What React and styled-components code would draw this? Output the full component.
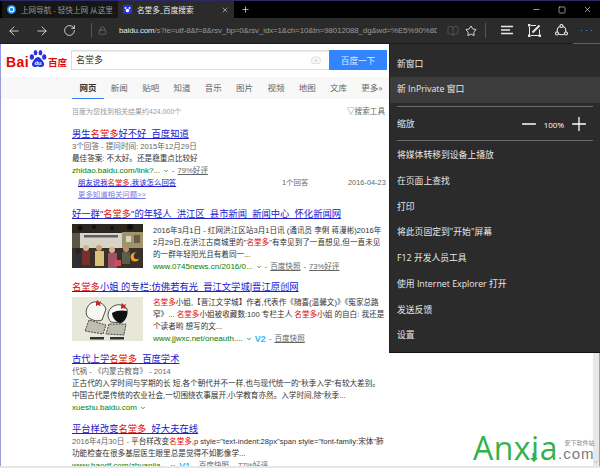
import React from 'react'
import styled, {createGlobalStyle} from 'styled-components'
import {ArrowLeft, ArrowRight, RotateCw, Lock, BookOpen, Star, X, Plus, Minus, Square, Camera, ChevronDown} from 'lucide-react'

const CJK = '"Noto Sans CJK SC", sans-serif'
const PAGE_FONT = `"Liberation Sans", ${CJK}`
const UI_FONT = `"Open Sans", ${CJK}`

const Global = createGlobalStyle`
  html, body { margin: 0; padding: 0; background: #fff; }
  * { box-sizing: border-box; }
`
const Win = styled.div`
  width: 600px;
  height: 468px;
  display: flex;
  flex-direction: column;
  overflow: hidden;
  border-top: 1px solid #2a2a6a;
  background: #fff;
  font-family: ${UI_FONT};
`
const TabBar = styled.div`
  height: 17px;
  flex: none;
  background: #000;
  display: flex;
  align-items: stretch;
  padding-left: 2px;
  color: #ddd;
`
const Tab = styled.div`
  width: 116px;
  display: flex;
  align-items: center;
  gap: 5px;
  padding: 0 5px;
  font-size: 7.6px;
  white-space: nowrap;
  overflow: hidden;
  background: ${p => p.$active ? '#2b2b2b' : '#161616'};
  color: ${p => p.$active ? '#f0f0f0' : '#999'};
`
const TabTitle = styled.span`
  flex: 1;
`
const NewTab = styled.div`
  width: 20px;
  display: flex;
  align-items: center;
  justify-content: center;
  margin-left: 1px;
`
const WinControls = styled.div`
  margin-left: auto;
  display: flex;
  align-items: center;
  gap: 17px;
  padding-right: 8px;
  color: #ccc;
`
const Toolbar = styled.div`
  height: 26px;
  flex: none;
  background: #2b2b2b;
  border-bottom: 1px solid #1c1c1c;
  display: flex;
  align-items: center;
  position: relative;
  padding-left: 7px;
  color: #e4e4e4;
`
const NavIcons = styled.div`
  display: flex;
  gap: 14px;
  align-items: center;
`
const Sep = styled.div`
  width: 1px;
  height: 15px;
  background: #555;
  margin: ${p => p.$margin};
`
const Url = styled.div`
  width: 318px;
  margin-left: 12px;
  font-size: 7.9px;
  letter-spacing: -0.1px;
  white-space: nowrap;
  overflow: hidden;
  color: #9a9a9a;
  font-family: ${PAGE_FONT};
  & b { color: #e8e8e8; font-weight: normal; }
`
const RightIcons = styled.div`
  display: flex;
  align-items: center;
  gap: ${p => p.$gap}px;
  margin-left: ${p => p.$left}px;
`
const More = styled.div`
  position: absolute;
  right: 0;
  bottom: -1px;
  width: 27px;
  height: 26px;
  border-bottom: 1px solid #1a6fc4;
  display: flex;
  align-items: center;
  justify-content: center;
  gap: 3.5px;
`
const Dot = styled.i`
  width: 1.5px;
  height: 1.5px;
  background: #2f8fe8;
`
const Main = styled.div`
  flex: 1;
  display: flex;
  min-height: 0;
  border-bottom: 2px solid #e6e6e6;
`
const Page = styled.div`
  width: 389px;
  flex: none;
  border-left: 1px solid #9a9ade;
  font-family: ${PAGE_FONT};
  overflow: hidden;
  display: flex;
  flex-direction: column;
`
const Head = styled.div`
  height: 33px;
  flex: none;
  display: flex;
  align-items: flex-start;
  padding: 3px 0 0 5px;
`
const Logo = styled.div`
  width: 65px;
  display: flex;
  align-items: flex-end;
  color: #e10601;
  font-weight: bold;
  white-space: nowrap;
  height: 23px;
`
const LogoLatin = styled.span`
  font-size: 14px;
  line-height: 16px;
  letter-spacing: 0.4px;
`
const LogoCjk = styled.span`
  font-size: 9.6px;
  line-height: 15px;
  font-family: ${CJK};
  letter-spacing: 0;
`
const SearchBox = styled.div`
  margin-top: 3px;
  width: 316px;
  height: 20px;
  display: flex;
  border: 1px solid #ddd;
  border-right: 0;
  box-shadow: inset 0 1px 1px #eee;
`
const SearchText = styled.div`
  flex: 1;
  padding-left: 4px;
  font-size: 9px;
  line-height: 18px;
  color: #333;
  font-family: ${CJK};
`
const CameraWrap = styled.div`
  width: 18px;
  display: flex;
  align-items: center;
  color: #bbb;
`
const SearchBtn = styled.div`
  width: 58px;
  margin: -1px 0;
  height: 20px;
  background: #3385ff;
  color: #dfeaff;
  font-size: 8.6px;
  line-height: 20px;
  text-align: center;
  font-family: ${CJK};
`
const NavRow = styled.div`
  height: 22px;
  flex: none;
  background: #f8f8f8;
  display: flex;
  gap: 14.3px;
  padding: 0 0 0 78.5px;
  white-space: nowrap;
`
const NavItem = styled.div`
  position: relative;
  font-size: 8.5px;
  line-height: 21px;
  color: ${p => p.$active ? '#333' : '#666'};
  font-weight: ${p => p.$active ? 'bold' : 'normal'};
  font-family: ${CJK};
  &::after {
    content: '';
    display: ${p => p.$active ? 'block' : 'none'};
    position: absolute;
    left: -8px;
    right: -7px;
    bottom: 0;
    height: 1px;
    background: #3385ff;
  }
`
const Stats = styled.div`
  display: flex;
  justify-content: space-between;
  padding: 8px 4px 0 71px;
  font-size: 7px;
  line-height: 10px;
  color: #999;
  margin-bottom: 10px;
  & > span:last-child { color: #666; font-size: 7.6px; }
`
const Results = styled.div`
  padding-left: 71px;
  display: flex;
  flex-direction: column;
`
const Result = styled.div`
  margin-bottom: ${p => p.$gap}px;
`
const Title = styled.div`
  font-size: 9.3px;
  line-height: 14px;
  height: 14px;
  color: #2020d0;
  text-decoration: underline;
  white-space: nowrap;
  & em { color: #e10601; font-style: normal; }
`
const Line = styled.div`
  font-size: 7.6px;
  line-height: 12px;
  height: 12px;
  color: ${p => p.$gray ? '#666' : '#333'};
  white-space: nowrap;
  & em { color: #e10601; font-style: normal; }
  & small { font-size: inherit; color: #666; }
`
const UrlLine = styled(Line)`
  display: flex;
  align-items: center;
  gap: 3px;
  color: #666;
`
const Green = styled.span`
  color: #008000;
  font-size: 8px;
`
const Snap = styled.span`
  color: #666;
  text-decoration: underline;
`
const V = styled.span`
  color: #3cb6f5;
  font-weight: bold;
  font-size: 9px;
`
const SubRow = styled.div`
  display: grid;
  grid-template-columns: 204px 66px 1fr;
  padding-left: 6px;
  font-size: 7.4px;
  line-height: 12px;
  height: 12px;
  color: #666;
  white-space: nowrap;
  & > a { color: #2020d0; text-decoration: underline; }
  & em { color: #e10601; font-style: normal; }
`
const MoreLink = styled.div`
  padding-left: 6px;
  font-size: 7.4px;
  line-height: 12px;
  color: #7a7ae0;
  text-decoration: underline;
`
const Media = styled.div`
  display: flex;
  gap: 10px;
  margin-top: 3px;
`
const MediaText = styled.div`
  padding-top: ${p => p.$top || 0}px;
`
const Thumb = styled.svg`
  width: 71px;
  height: 44px;
  flex: none;
  display: block;
`
const Side = styled.div`
  width: 211px;
  flex: none;
  display: flex;
  flex-direction: column;
`
const Menu = styled.div`
  height: 309px;
  flex: none;
  background: #2b2b2b;
  border-bottom: 1px solid #111;
  border-left: 1px solid #222;
  padding-top: 7.5px;
  color: #e8e8e8;
  font-size: 8.8px;
`
const MenuItem = styled.div`
  height: 25.7px;
  line-height: 25.7px;
  padding: 0 7px;
  white-space: nowrap;
  background: ${p => p.$hover ? '#3c3c3c' : 'transparent'};
`
const MenuSep = styled.div`
  height: 1px;
  margin: ${p => p.$margin};
  background: #6a6a6a;
`
const ZoomRow = styled(MenuItem)`
  display: flex;
  align-items: center;
  height: 31px;
  line-height: 31px;
`
const ZoomCtl = styled.div`
  margin-left: auto;
  display: flex;
  align-items: center;
  gap: 4px;
  padding-right: 3px;
  font-size: 8px;
  color: #fff;
`
const Blank = styled.div`
  flex: 1;
  position: relative;
  display: flex;
  justify-content: flex-end;
  border-right: 1px solid #9a9ade;
`
const Scroll = styled.div`
  width: 6px;
  background: #e8e8e8;
  display: flex;
  flex-direction: column;
  justify-content: flex-end;
  align-items: center;
  color: #888;
  padding-bottom: 1px;
`
const Watermark = styled.div`
  position: absolute;
  left: 84px;
  bottom: 0;
  display: flex;
  align-items: flex-end;
  font-family: "Open Sans", sans-serif;
  white-space: nowrap;
`
const WmName = styled.span`
  position: relative;
  font-size: 32px;
  line-height: 36px;
  color: #35b14b;
  letter-spacing: 0.5px;
`
const WmArrow = styled.svg`
  position: absolute;
  left: 57px;
  bottom: 4px;
`
const WmRight = styled.div`
  display: flex;
  flex-direction: column;
  align-items: flex-end;
  margin-bottom: 5px;
`
const WmCn = styled.span`
  display: block;
  font-size: 6px;
  line-height: 7px;
  color: #888;
  font-family: ${CJK};
`
const WmCom = styled.span`
  display: block;
  font-family: "Liberation Sans", sans-serif;
  font-size: 15px;
  line-height: 15px;
  letter-spacing: 1px;
  color: #7c7c7c;
`

const Paw = () => (
  <svg width="18" height="21" viewBox="0 0 22 24" style={{margin: '0 1px 0 0', flex: 'none'}}>
    <g fill="#2932e1">
      <ellipse cx="3.5" cy="9" rx="2.6" ry="3.3" />
      <ellipse cx="8" cy="3.6" rx="2.3" ry="3.3" />
      <ellipse cx="14" cy="3.6" rx="2.3" ry="3.3" />
      <ellipse cx="18.6" cy="9" rx="2.6" ry="3.3" />
      <path d="M11 9c3 0 4 3 6 5s2.400 6-1 7-3.500-.8-5-.8-2 1.700-5 .8-2.700-5-1-7 3-5 6-5z" />
    </g>
    <text x="11" y="19" textAnchor="middle" fontSize="7" fontWeight="bold" fill="#fff" fontFamily="Liberation Sans">du</text>
  </svg>
)
const Drop = () => <ChevronDown size={6} color="#008000" strokeWidth={3} />

const HubIcon = () => (
  <svg width="13" height="11" viewBox="0 0 13 11" stroke="#e8e8e8" strokeWidth="1.3">
    <path d="M0 1.500h12M0 5h9M0 8.500h12" />
  </svg>
)
const NoteIcon = () => (
  <svg width="13" height="13" viewBox="0 0 13 13" fill="none" stroke="#e8e8e8" strokeWidth="1">
    <path d="M1.500 3v8M3 11.500h8M11.500 5.500v5M3 1.500h5" />
    <path d="M4.500 8.500L11.500 1.500" strokeWidth="2" />
    <g fill="#e8e8e8" stroke="none">
      <rect x="0" y="0" width="2.500" height="2.500" /><rect x="0" y="10.500" width="2.500" height="2.500" /><rect x="10.500" y="10.500" width="2.500" height="2.500" />
    </g>
  </svg>
)
const ShareIcon = () => (
  <svg width="13" height="13" viewBox="0 0 13 13" fill="none" stroke="#e8e8e8" strokeWidth="1.100">
    <circle cx="6.500" cy="6.500" r="4.300" />
    <circle cx="6.500" cy="2" r="1.500" fill="#2b2b2b" />
    <circle cx="2" cy="9.500" r="1.500" fill="#2b2b2b" />
    <circle cx="11" cy="9.500" r="1.500" fill="#2b2b2b" />
  </svg>
)
const TabIcon = ({bg, children}) => (
  <svg width="9" height="9" viewBox="0 0 9 9" style={{flex: 'none'}}>
    <rect width="9" height="9" rx={bg === '#1e88e5' ? 4.500 : 1} fill={bg} />
    {children}
  </svg>
)
const PhotoThumb = () => (
  <Thumb viewBox="0 0 71 44">
    <rect width="71" height="44" fill="#5c554a" />
    <rect width="71" height="9" fill="#2b2620" />
    <g fill="#11100e"><circle cx="8" cy="4" r="2.500" /><circle cx="22" cy="3" r="2" /><circle cx="40" cy="4" r="2" /><circle cx="58" cy="3" r="3" /></g>
    <rect x="8" y="9" width="42" height="15" fill="#d9d5c6" />
    <rect x="50" y="8" width="21" height="18" fill="#a0946f" />
    <rect x="12" y="11" width="34" height="2.500" fill="#5f5c70" />
    <rect x="54" y="12" width="5" height="6" fill="#d9d5c6" /><rect x="62" y="11" width="6" height="8" fill="#6b5a3e" />
    <rect y="24" width="71" height="20" fill="#3a3028" />
    <circle cx="6" cy="27" r="3" fill="#2a2420" /><rect x="2" y="30" width="8" height="14" fill="#2e3038" />
    <circle cx="14" cy="24" r="3" fill="#d9b08c" /><rect x="10" y="27" width="8" height="14" fill="#7a2e2e" />
    <circle cx="27" cy="24" r="3" fill="#c9a078" /><rect x="23" y="27" width="9" height="15" fill="#d8c27a" />
    <circle cx="40" cy="26" r="3" fill="#d9b08c" /><rect x="36" y="29" width="9" height="15" fill="#a0516a" />
    <circle cx="54" cy="25" r="3" fill="#b98d68" /><rect x="50" y="28" width="8" height="12" fill="#56604a" />
    <rect x="42" y="36" width="7" height="6" fill="#d04a5a" />
    <circle cx="63" cy="33" r="4.500" fill="#f0a020" /><circle cx="65" cy="32" r="3.200" fill="#3a3028" />
  </Thumb>
)
const CartoonThumb = () => (
  <Thumb viewBox="0 0 71 44">
    <rect width="71" height="44" fill="#e8e8d8" />
    <g stroke="#222" strokeWidth="0.800" fill="#f8f8f2">
      <path d="M19 6c6-3 13 0 15 6l-4 11c-5 2-12 0-15-4-2-5 0-10 4-13z" />
      <path d="M39 11c5-5 13-4 16 1 1 5-2 12-6 14l-10-1c-4-4-4-10 0-14z" />
      <path d="M17 23l-4 11 18 3 3-9zM37 27l-3 10 18 1 2-11z" fill="#bdbdb0" strokeDasharray="2 1" />
    </g>
    <path d="M40 16c4-3 11-3 15-2 1 5-2 10-6 12-4 0-9-5-9-10z" fill="#111" />
    <path d="M25 3l2 2 2-1-1 3 1 2-3-1-2 1 0-3z" fill="#c22" />
    <path d="M50 6l2 2 2-1-1 3 1 2-3-1-2 1 0-3z" fill="#c22" />
    <rect x="18" y="40" width="14" height="2.500" fill="#333" /><rect x="38" y="40" width="14" height="2.500" fill="#333" />
  </Thumb>
)

export default function App() {
  const nav = ['新闻', '贴吧', '知道', '音乐', '图片', '视频', '地图', '文库']
  return (
    <Win>
      <Global />
      <TabBar>
        <Tab>
          <TabIcon bg="#1e88e5"><circle cx="4.500" cy="4.500" r="2.300" fill="none" stroke="#fff" strokeWidth="1.200" /></TabIcon>
          <TabTitle>上网导航 - 轻快上网 从这里</TabTitle>
        </Tab>
        <Tab $active>
          <TabIcon bg="#2932e1"><circle cx="4.500" cy="5.500" r="1.800" fill="#fff" /><circle cx="2.500" cy="3" r="0.900" fill="#fff" /><circle cx="6.500" cy="3" r="0.900" fill="#fff" /></TabIcon>
          <TabTitle>名堂多_百度搜索</TabTitle>
          <X size={8} color="#ccc" />
        </Tab>
        <NewTab><Plus size={9} color="#ddd" /></NewTab>
        <WinControls>
          <Minus size={9} />
          <Square size={8} />
          <X size={9} />
        </WinControls>
      </TabBar>
      <Toolbar>
        <NavIcons>
          <ArrowLeft size={14} strokeWidth={1.500} />
          <ArrowRight size={14} strokeWidth={1.500} />
          <RotateCw size={13} strokeWidth={1.600} />
        </NavIcons>
        <Sep $margin="0 6px 0 15px" />
        <Lock size={9} color="#888" strokeWidth={1.400} />
        <Url><b>baidu.com</b>/s?ie=utf-8&amp;f=8&amp;rsv_bp=0&amp;rsv_idx=1&amp;ch=10&amp;tn=98012088_dg&amp;wd=%E5%90%8D%</Url>
        <RightIcons $gap={6} $left={10}>
          <BookOpen size={12} color="#555" strokeWidth={1.800} />
          <Star size={12} color="#f0f0f0" strokeWidth={1.800} />
        </RightIcons>
        <Sep $margin="0 0 0 8px" />
        <RightIcons $gap={14} $left={15}>
          <HubIcon />
          <NoteIcon />
          <ShareIcon />
        </RightIcons>
        <More><Dot /><Dot /><Dot /></More>
      </Toolbar>
      <Main>
        <Page>
          <Head>
            <Logo>
              <LogoLatin>Bai</LogoLatin>
              <Paw />
              <LogoCjk>百度</LogoCjk>
            </Logo>
            <SearchBox>
              <SearchText>名堂多</SearchText>
              <CameraWrap><Camera size={10} strokeWidth={1.300} /></CameraWrap>
              <SearchBtn>百度一下</SearchBtn>
            </SearchBox>
          </Head>
          <NavRow>
            <NavItem $active>网页</NavItem>
            {nav.map(n => <NavItem key={n}>{n}</NavItem>)}
            <NavItem>更多»</NavItem>
          </NavRow>
          <Stats>
            <span>百度为您找到相关结果约424,000个</span>
            <span>▽搜索工具</span>
          </Stats>
          <Results>
            <Result $gap={6}>
              <Title>男生<em>名堂多</em>好不好_百度知道</Title>
              <Line $gray>3个回答 - 提问时间: 2015年12月29日</Line>
              <Line>最佳答案: 不太好。还是稳重点比较好</Line>
              <UrlLine><Green>zhidao.baidu.com/link?...</Green><Drop /> - <Snap>79%好评</Snap></UrlLine>
              <SubRow><a>朋友说我<em>名堂多</em>,我该怎么回答</a><span>1个回答</span><span>2016-04-23</span></SubRow>
              <MoreLink>更多知道相关问题&gt;&gt;</MoreLink>
            </Result>
            <Result $gap={7}>
              <Title>好一群"<em>名堂多</em>"的年轻人_洪江区_县市新闻_新闻中心_怀化新闻网</Title>
              <Media>
                <PhotoThumb />
                <MediaText $top={1}>
                  <Line>2016年3月1日 - 红网洪江区站3月1日讯 (通讯员 李俐 蒋漫彬)2016年</Line>
                  <Line>2月29日,在洪江古商城里的"<em>名堂多</em>"有幸见到了一直想见,但一直未见</Line>
                  <Line>的一群年轻阳光且有着同一...</Line>
                  <UrlLine><Green>www.0745news.cn/2016/0...</Green><Drop /> - <Snap>百度快照</Snap> - <Snap>73%好评</Snap></UrlLine>
                </MediaText>
              </Media>
            </Result>
            <Result $gap={7}>
              <Title><em>名堂多</em>小姐 的专栏:仿佛若有光_晋江文学城|晋江原创网</Title>
              <Media>
                <CartoonThumb />
                <MediaText>
                  <Line><em>名堂多</em>小姐,【晋江文学城】作者,代表作《随喜(温馨文)》《冤家总路</Line>
                  <Line>窄》... <em>名堂多</em>小姐被收藏数:100 专栏主人 <em>名堂多</em>小姐 的自白: 我还是</Line>
                  <Line>个读者哟 想写的文...</Line>
                  <UrlLine><Green>www.jjwxc.net/oneauth....</Green><Drop /><V>V2</V> - <Snap>百度快照</Snap></UrlLine>
                </MediaText>
              </Media>
            </Result>
            <Result $gap={8}>
              <Title>古代上学<em>名堂多</em>_百度学术</Title>
              <Line $gray>代祸 - 《内蒙古教育》 - 2014</Line>
              <Line>正古代的入学时间与学期的长 短,各个朝代并不一样,也与现代统一的"秋季入学"有较大差别。</Line>
              <Line>中国古代是传统的农业社会,一切围绕农事展开,小学教育亦然。入学时间,除"秋季...</Line>
              <UrlLine><Green>xueshu.baidu.com</Green><Drop /></UrlLine>
            </Result>
            <Result $gap={0}>
              <Title>平台样改变<em>名堂多</em>_好大夫在线</Title>
              <Line><small>2016年4月30日 - </small>平台样改变<em>名堂多</em>,p style="text-indent:28px"span style="font-family:宋体"肺</Line>
              <Line>功能检查在很多基层医生眼里总是觉得不如影像学...</Line>
              <UrlLine><Green>www.haodf.com/zhuanjia...</Green><Drop /><V>V1</V> - <Snap>百度快照</Snap> - <Snap>77%好评</Snap></UrlLine>
            </Result>
          </Results>
        </Page>
        <Side>
          <Menu>
            <MenuItem>新窗口</MenuItem>
            <MenuItem $hover>新 InPrivate 窗口</MenuItem>
            <MenuSep $margin="3px 7px 2px" />
            <ZoomRow>
              缩放
              <ZoomCtl>
                <Minus size={22} strokeWidth={1.400} />
                100%
                <Plus size={22} strokeWidth={1.400} />
              </ZoomCtl>
            </ZoomRow>
            <MenuSep $margin="0 7px 2.5px" />
            <MenuItem>将媒体转移到设备上播放</MenuItem>
            <MenuItem>在页面上查找</MenuItem>
            <MenuItem>打印</MenuItem>
            <MenuItem>将此页固定到"开始"屏幕</MenuItem>
            <MenuItem>F12 开发人员工具</MenuItem>
            <MenuItem>使用 Internet Explorer 打开</MenuItem>
            <MenuItem>发送反馈</MenuItem>
            <MenuItem>设置</MenuItem>
          </Menu>
          <Blank>
            <Scroll><ChevronDown size={6} /></Scroll>
            <Watermark>
              <WmName>
                Anxia
                <WmArrow width="8" height="9" viewBox="0 0 8 9"><path d="M2.500 0h3v5H8L4 9 0 5h2.500z" fill="#35b14b" /></WmArrow>
              </WmName>
              <WmRight>
                <WmCn>安下软件站</WmCn>
                <WmCom>.com</WmCom>
              </WmRight>
            </Watermark>
          </Blank>
        </Side>
      </Main>
    </Win>
  )
}
